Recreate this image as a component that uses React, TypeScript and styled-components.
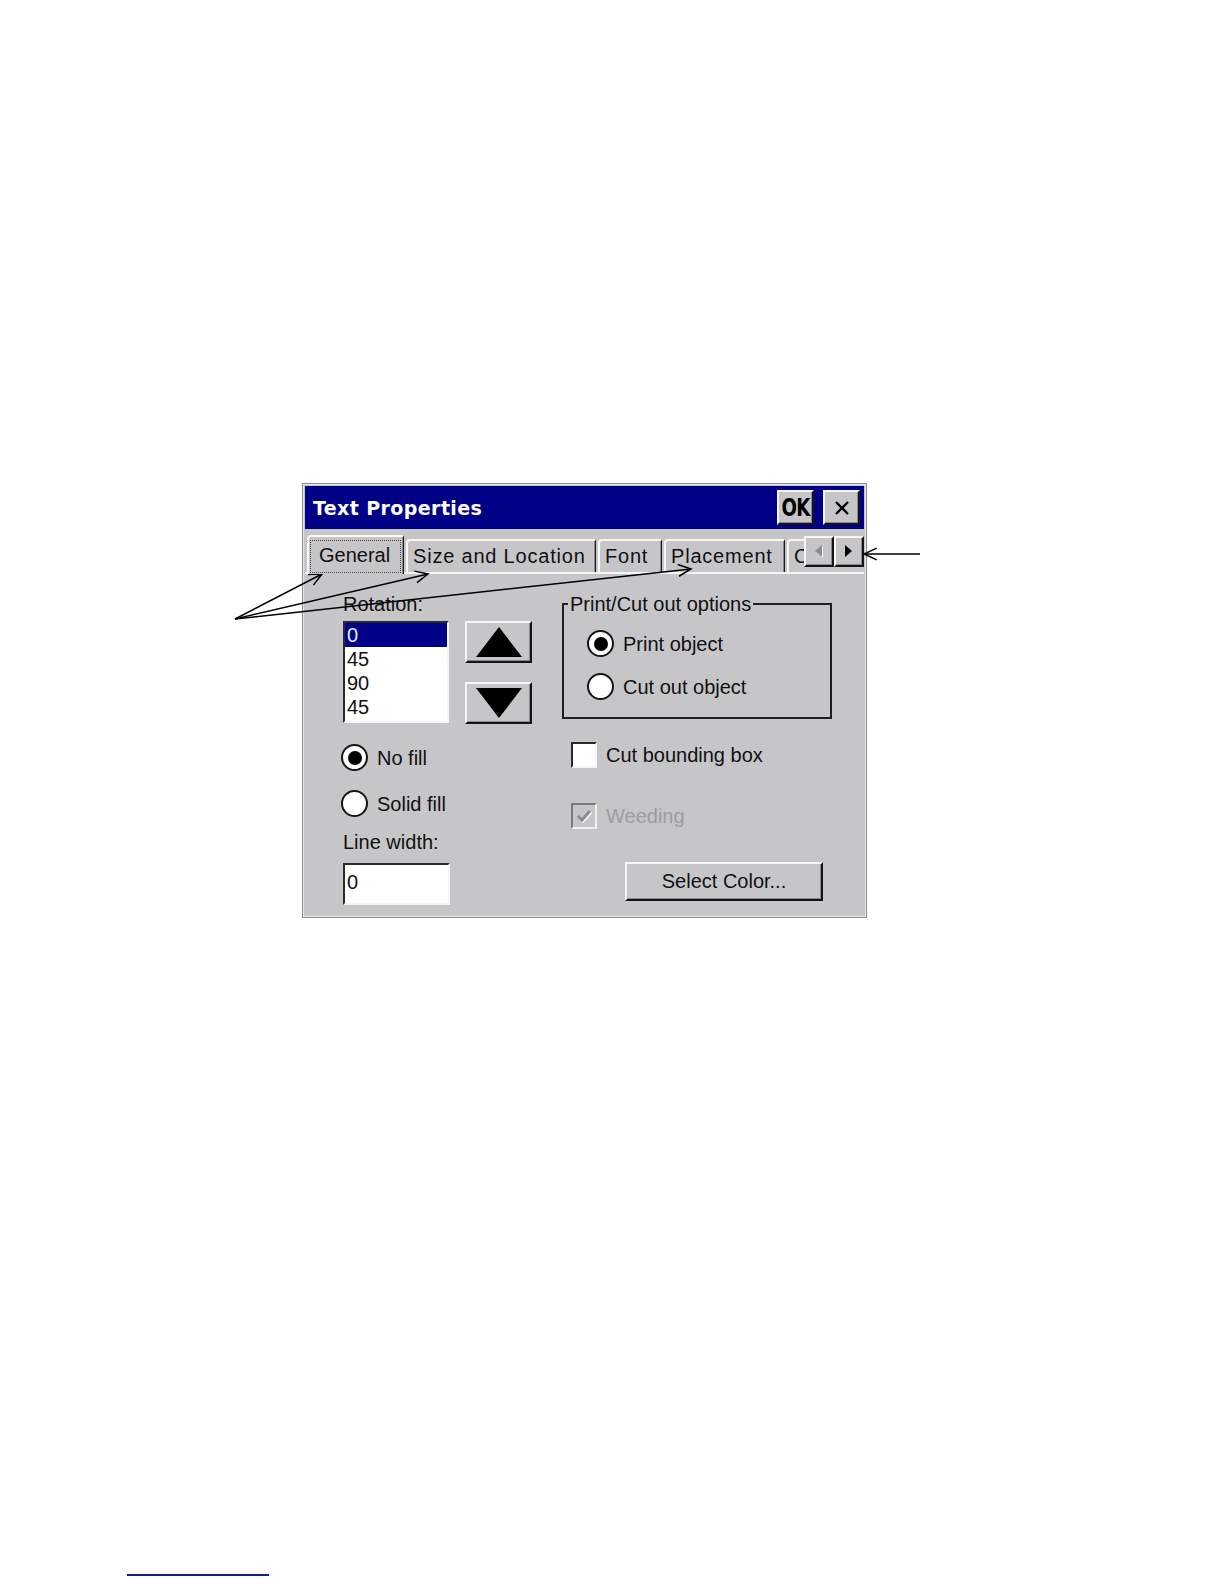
import React from 'react';
import styled, { createGlobalStyle, css } from 'styled-components';

const FACE = '#c6c6c9';
const UI_FONT = '"Liberation Sans", Arial, sans-serif';

const GlobalStyle = createGlobalStyle`
  html, body { margin: 0; padding: 0; background: #fff; }
  body { font-family: ${UI_FONT}; }
`;

const raised = css`
  border-style: solid;
  border-width: 2px;
  border-color: #f6f6f6 #141414 #141414 #f6f6f6;
  box-shadow: inset -1px -1px 0 #8a8a8e;
  background: ${FACE};
`;

const sunken = css`
  border-style: solid;
  border-width: 2px;
  border-color: #2a2a2a #f6f6f6 #f6f6f6 #2a2a2a;
  background: #fff;
`;

const Page = styled.div`
  position: relative;
  width: 1224px;
  height: 1584px;
  box-sizing: border-box;
  padding-top: 483px;
  display: flex;
  flex-direction: column;
  overflow: hidden;
`;

const Dialog = styled.div`
  margin-left: 302px;
  width: 565px;
  height: 435px;
  box-sizing: border-box;
  border: 1px solid #8c8c90;
  padding: 2px;
  background: ${FACE};
  box-shadow: inset 0 0 0 1px #e6e6e8;
  display: flex;
  flex-direction: column;
  font-family: ${UI_FONT};
  font-size: 20px;
  color: #111;
`;

const TitleBar = styled.div`
  flex: none;
  height: 43px;
  background: #000086;
  display: flex;
  align-items: center;
  gap: 9px;
  padding: 0 4px 0 8px;
`;

const Title = styled.div`
  flex: 1;
  font-family: "DejaVu Sans", Verdana, sans-serif;
  font-weight: bold;
  font-size: 19px;
  color: #fff;
  letter-spacing: 0.4px;
`;

const TitleButton = styled.button`
  ${raised};
  box-sizing: border-box;
  width: 37px;
  height: 35px;
  padding: 0;
  display: flex;
  align-items: center;
  justify-content: center;
  color: #000;
`;

const OkGlyph = styled.span`
  display: inline-block;
  font-family: "DejaVu Sans", Verdana, sans-serif;
  font-weight: bold;
  font-size: 24px;
  line-height: 1;
  letter-spacing: -1px;
  transform: scaleX(0.76);
`;

const TabStrip = styled.div`
  flex: none;
  height: 43px;
  display: flex;
`;

const TabList = styled.div`
  flex: 1;
  min-width: 0;
  display: flex;
  align-items: flex-end;
  gap: 2px;
  padding-left: 2px;
  overflow-x: clip;
  overflow-y: visible;
`;

const Tab = styled.div<{ $w: number; $active?: boolean }>`
  flex: none;
  position: relative;
  z-index: ${(p) => (p.$active ? 2 : 0)};
  box-sizing: border-box;
  width: ${(p) => p.$w}px;
  height: ${(p) => (p.$active ? 39 : 33)}px;
  margin-bottom: ${(p) => (p.$active ? -2 : 0)}px;
  padding: ${(p) => (p.$active ? '3px 2px 0 1px' : '3px 0 0 5px')};
  border-top: 2px solid #f6f6f6;
  border-left: 2px solid #f6f6f6;
  border-right: 1px solid #1a1a1a;
  border-top-left-radius: 4px;
  box-shadow: inset -1px 0 0 #8a8a8e;
  background: ${FACE};
  line-height: 24px;
  letter-spacing: ${(p) => (p.$active ? 0 : 0.8)}px;
  white-space: nowrap;
`;

const FocusRing = styled.div`
  box-sizing: border-box;
  height: 33px;
  border: 1px dotted #444;
  padding: 2px 0 0 8px;
`;

const ScrollGroup = styled.div`
  flex: none;
  display: flex;
  align-self: flex-start;
  margin-top: 7px;
`;

const ScrollButton = styled.div`
  ${raised};
  box-sizing: border-box;
  width: 30px;
  height: 31px;
  display: flex;
  align-items: center;
  justify-content: center;
`;

const Panel = styled.div`
  flex: 1;
  box-sizing: border-box;
  border-top: 2px solid #f6f6f6;
  display: flex;
  gap: 30px;
  padding: 18px 0 0 38px;
`;

const Column = styled.div<{ $w: number }>`
  flex: none;
  width: ${(p) => p.$w}px;
  display: flex;
  flex-direction: column;
`;

const Label = styled.div<{ $mt?: number }>`
  line-height: 24px;
  height: 24px;
  margin-top: ${(p) => p.$mt ?? 0}px;
`;

const ListRow = styled.div`
  display: flex;
  gap: 16px;
  margin-top: 5px;
`;

const ListBox = styled.div`
  ${sunken};
  box-sizing: border-box;
  width: 106px;
  height: 102px;
  overflow: hidden;
`;

const ListItem = styled.div<{ $selected?: boolean }>`
  height: 24px;
  line-height: 24px;
  padding-left: 2px;
  background: ${(p) => (p.$selected ? '#000088' : 'transparent')};
  color: ${(p) => (p.$selected ? '#e8ecff' : '#111')};
`;

const SpinColumn = styled.div`
  display: flex;
  flex-direction: column;
  gap: 19px;
`;

const SpinButton = styled.div`
  ${raised};
  box-sizing: border-box;
  width: 67px;
  height: 42px;
  display: flex;
  align-items: center;
  justify-content: center;
`;

const ChoiceRow = styled.div<{ $mt?: number; $ml?: number }>`
  display: flex;
  align-items: center;
  gap: 9px;
  height: 27px;
  margin-top: ${(p) => p.$mt ?? 0}px;
  margin-left: ${(p) => p.$ml ?? 0}px;
  white-space: nowrap;
`;

const RadioDot = styled.span<{ $on?: boolean }>`
  flex: none;
  box-sizing: border-box;
  width: 27px;
  height: 27px;
  border-radius: 50%;
  border: 2px solid #141414;
  background: #fff;
  display: flex;
  align-items: center;
  justify-content: center;
  &::after {
    content: '';
    display: ${(p) => (p.$on ? 'block' : 'none')};
    width: 14px;
    height: 14px;
    border-radius: 50%;
    background: #000;
  }
`;

const CheckBox = styled.span<{ $disabled?: boolean }>`
  ${sunken};
  flex: none;
  box-sizing: border-box;
  width: 26px;
  height: 26px;
  display: flex;
  align-items: center;
  justify-content: center;
  border-color: ${(p) =>
    p.$disabled ? '#7a7a7e #f0f0f0 #f0f0f0 #7a7a7e' : '#2a2a2a #f6f6f6 #f6f6f6 #2a2a2a'};
  background: ${(p) => (p.$disabled ? FACE : '#fff')};
`;

const ChoiceText = styled.span<{ $disabled?: boolean }>`
  color: ${(p) => (p.$disabled ? '#9c9ca0' : '#111')};
  line-height: 24px;
`;

const TextBox = styled.div`
  ${sunken};
  box-sizing: border-box;
  width: 107px;
  height: 42px;
  margin-top: 9px;
  padding: 5px 0 0 2px;
  line-height: 24px;
`;

const GroupBox = styled.fieldset`
  margin: 0;
  min-width: 0;
  border: 2px solid #1e1e1e;
  padding: 14px 0 17px 4px;
  display: flex;
  flex-direction: column;
  gap: 16px;
`;

const GroupLegend = styled.legend`
  padding: 0 2px;
  line-height: 24px;
`;

const PushButton = styled.button`
  ${raised};
  box-sizing: border-box;
  width: 198px;
  height: 39px;
  margin: 33px 0 0 63px;
  padding: 0;
  font-family: ${UI_FONT};
  font-size: 20px;
  color: #111;
`;

const Overlay = styled.svg`
  position: absolute;
  left: 0;
  top: 0;
  pointer-events: none;
`;

const FootRule = styled.div`
  margin: auto 0 8px 127px;
  width: 142px;
  height: 2px;
  background: #1c1c8c;
`;

type Pt = [number, number];

const arrowHead = (from: Pt, to: Pt, len = 14, spread = 25) => {
  const dx = from[0] - to[0];
  const dy = from[1] - to[1];
  const d = Math.hypot(dx, dy);
  const ux = dx / d;
  const uy = dy / d;
  const a = (spread * Math.PI) / 180;
  const rot = (s: number): Pt => [
    to[0] + len * (ux * Math.cos(s * a) - uy * Math.sin(s * a)),
    to[1] + len * (ux * Math.sin(s * a) + uy * Math.cos(s * a)),
  ];
  const [p1, p2] = [rot(1), rot(-1)];
  return `M${p1[0]},${p1[1]} L${to[0]},${to[1]} L${p2[0]},${p2[1]}`;
};

const callouts: { from: Pt; to: Pt }[] = [
  { from: [235, 619], to: [322, 574] },
  { from: [235, 619], to: [428, 574] },
  { from: [235, 619], to: [691, 569] },
  { from: [920, 554], to: [864, 554] },
];

const Annotations = () => (
  <Overlay width={1224} height={1584} viewBox="0 0 1224 1584">
    {callouts.map((c, i) => (
      <g key={i} fill="none" stroke="#000" strokeWidth={1.5}>
        <line x1={c.from[0]} y1={c.from[1]} x2={c.to[0]} y2={c.to[1]} />
        <path d={arrowHead(c.from, c.to)} />
      </g>
    ))}
  </Overlay>
);

const CloseIcon = () => (
  <svg width="16" height="16" viewBox="0 0 16 16">
    <path d="M2 2 L14 14 M14 2 L2 14" stroke="#000" strokeWidth="2.4" />
  </svg>
);

const Triangle = ({ dir }: { dir: 'up' | 'down' }) => (
  <svg width="46" height="30" viewBox="0 0 46 30">
    <polygon points={dir === 'up' ? '23,0 46,30 0,30' : '0,0 46,0 23,30'} fill="#000" />
  </svg>
);

const SmallArrow = ({ dir, disabled }: { dir: 'left' | 'right'; disabled?: boolean }) => {
  const pts = dir === 'left' ? '7,0 7,12 0,6' : '0,0 0,12 7,6';
  return (
    <svg width="9" height="14" viewBox="0 0 9 14">
      {disabled && <polygon points={pts} fill="#fff" transform="translate(1 1)" />}
      <polygon points={pts} fill={disabled ? '#8c8c90' : '#000'} />
    </svg>
  );
};

const CheckMark = () => (
  <svg width="18" height="16" viewBox="0 0 18 16">
    <path d="M3 8 L7 12 L15 3" fill="none" stroke="#fff" strokeWidth="3" transform="translate(1 1)" />
    <path d="M3 8 L7 12 L15 3" fill="none" stroke="#8c8c90" strokeWidth="3" />
  </svg>
);

const tabs = [
  { label: 'General', w: 97, active: true },
  { label: 'Size and Location', w: 190 },
  { label: 'Font', w: 64 },
  { label: 'Placement', w: 121 },
  { label: 'Color', w: 70 },
];

const rotations = ['0', '45', '90', '45'];

export default function App() {
  return (
    <Page>
      <GlobalStyle />
      <Dialog>
        <TitleBar>
          <Title>Text Properties</Title>
          <TitleButton>
            <OkGlyph>OK</OkGlyph>
          </TitleButton>
          <TitleButton>
            <CloseIcon />
          </TitleButton>
        </TitleBar>

        <TabStrip>
          <TabList>
            {tabs.map((t) => (
              <Tab key={t.label} $w={t.w} $active={t.active}>
                {t.active ? <FocusRing>{t.label}</FocusRing> : t.label}
              </Tab>
            ))}
          </TabList>
          <ScrollGroup>
            <ScrollButton>
              <SmallArrow dir="left" disabled />
            </ScrollButton>
            <ScrollButton>
              <SmallArrow dir="right" />
            </ScrollButton>
          </ScrollGroup>
        </TabStrip>

        <Panel>
          <Column $w={189}>
            <Label>Rotation:</Label>
            <ListRow>
              <ListBox>
                {rotations.map((r, i) => (
                  <ListItem key={i} $selected={i === 0}>
                    {r}
                  </ListItem>
                ))}
              </ListBox>
              <SpinColumn>
                <SpinButton>
                  <Triangle dir="up" />
                </SpinButton>
                <SpinButton>
                  <Triangle dir="down" />
                </SpinButton>
              </SpinColumn>
            </ListRow>
            <ChoiceRow $mt={20} $ml={-2}>
              <RadioDot $on />
              <ChoiceText>No fill</ChoiceText>
            </ChoiceRow>
            <ChoiceRow $mt={19} $ml={-2}>
              <RadioDot />
              <ChoiceText>Solid fill</ChoiceText>
            </ChoiceRow>
            <Label $mt={13}>Line width:</Label>
            <TextBox>0</TextBox>
          </Column>

          <Column $w={270}>
            <GroupBox>
              <GroupLegend>Print/Cut out options</GroupLegend>
              <ChoiceRow $ml={19}>
                <RadioDot $on />
                <ChoiceText>Print object</ChoiceText>
              </ChoiceRow>
              <ChoiceRow $ml={19}>
                <RadioDot />
                <ChoiceText>Cut out object</ChoiceText>
              </ChoiceRow>
            </GroupBox>
            <ChoiceRow $mt={22} $ml={9}>
              <CheckBox />
              <ChoiceText>Cut bounding box</ChoiceText>
            </ChoiceRow>
            <ChoiceRow $mt={34} $ml={9}>
              <CheckBox $disabled>
                <CheckMark />
              </CheckBox>
              <ChoiceText $disabled>Weeding</ChoiceText>
            </ChoiceRow>
            <PushButton>Select Color...</PushButton>
          </Column>
        </Panel>
      </Dialog>
      <FootRule />
      <Annotations />
    </Page>
  );
}
